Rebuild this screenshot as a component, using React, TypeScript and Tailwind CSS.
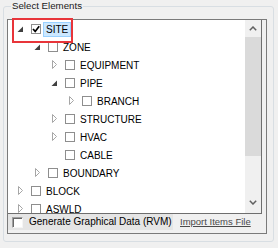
import React from "react";

type Row = { l: number; t: string; e: "open" | "closed" | "none"; checked?: boolean; sel?: boolean };

const rows: Row[] = [
  { l: 0, t: "SITE", e: "open", checked: true, sel: true },
  { l: 1, t: "ZONE", e: "open" },
  { l: 2, t: "EQUIPMENT", e: "closed" },
  { l: 2, t: "PIPE", e: "open" },
  { l: 3, t: "BRANCH", e: "closed" },
  { l: 2, t: "STRUCTURE", e: "closed" },
  { l: 2, t: "HVAC", e: "closed" },
  { l: 2, t: "CABLE", e: "none" },
  { l: 1, t: "BOUNDARY", e: "closed" },
  { l: 0, t: "BLOCK", e: "closed" },
  { l: 0, t: "ASWLD", e: "closed" },
];

const indent = ["pl-[9px]", "pl-[26px]", "pl-[43px]", "pl-[60px]"];

function Expander({ e }: { e: Row["e"] }) {
  return (
    <svg width="14" height="18" viewBox="0 0 14 18" className="shrink-0">
      {e === "open" && <path d="M6 6.5 L6 12 L0.5 12 Z" fill="#404040" />}
      {e === "closed" && <path d="M1.5 4.5 L5.5 8.5 L1.5 12.5 Z" fill="none" stroke="#a6a6a6" strokeWidth="1" />}
    </svg>
  );
}

function Check({ checked }: { checked?: boolean }) {
  return (
    <div className="w-[10px] h-[10px] border border-[#8e8e8e] bg-white shrink-0 flex items-center justify-center">
      {checked && (
        <svg width="8" height="8" viewBox="0 0 8 8">
          <path d="M1 4 L3.2 6.4 L7.2 1.2" fill="none" stroke="#000" strokeWidth="1.7" />
        </svg>
      )}
    </div>
  );
}

export default function App() {
  return (
    <div className="w-[278px] h-[248px] bg-[#f0f0f0] pt-[6px] pl-[3px] font-['Liberation_Sans',Arial,sans-serif] text-black">
      <div className="relative w-[271px] h-[236px] border border-[#d8dee3] rounded-[3px] pt-[12px] pl-[3px]">
        <div className="absolute left-[7px] top-[-7px] px-[1px] bg-[#f0f0f0] text-[9.7px] leading-[12px] text-[#1a1a1a]">
          Select Elements
        </div>
        <div className="w-[260px] h-[215px] border border-[#7a7a7a] flex flex-col">
          <div className="flex h-[194px] w-[254px] border-r border-b border-[#6e6e6e] bg-white">
            <div className="w-[237px] h-[193px] overflow-hidden flex flex-col">
              {rows.map((r, i) => (
                <div key={i} className={`h-[18px] shrink-0 flex items-center ${indent[r.l]}`}>
                  <Expander e={r.e} />
                  <Check checked={r.checked} />
                  <span
                    className={`ml-[2px] px-[2px] border h-[15px] text-[10px] leading-[13px] ${
                      r.sel ? "bg-[#cce8ff] border-[#99d1ff]" : "border-transparent"
                    }`}
                  >
                    {r.t}
                  </span>
                </div>
              ))}
            </div>
            <div className="w-[16px] h-[193px] flex flex-col">
              <div className="h-[17px] bg-[#f0f0f0] flex items-center justify-center">
                <svg width="8" height="5" viewBox="0 0 8 5">
                  <path d="M0.8 4.2 L4 1 L7.2 4.2" fill="none" stroke="#606060" strokeWidth="1.5" />
                </svg>
              </div>
              <div className="h-[119px] bg-[#dadada]" />
              <div className="flex-1 bg-[#f0f0f0]" />
              <div className="h-[17px] bg-[#f0f0f0] flex items-start justify-center pt-[4px]">
                <svg width="8" height="5" viewBox="0 0 8 5">
                  <path d="M0.8 0.8 L4 4 L7.2 0.8" fill="none" stroke="#606060" strokeWidth="1.5" />
                </svg>
              </div>
            </div>
          </div>
          <div className="flex h-[19px] items-start">
            <div className="h-[16px] w-[165px] bg-[#e5e5e5] flex items-center pl-[4px]">
              <div className="w-[11px] h-[11px] bg-white border border-t-[#a0a0a0] border-l-[#a0a0a0] border-r-[#f5f5f5] border-b-[#f5f5f5] shadow-[inset_1px_1px_0_#696969]" />
              <span className="ml-[6px] text-[10px] leading-[12px]">Generate Graphical Data (RVM)</span>
            </div>
            <span className="ml-[7px] mt-[2px] text-[9.5px] leading-[12px] text-[#4a4a4a] underline">Import Items File</span>
          </div>
        </div>
        <div className="absolute left-[8px] top-[11px] w-[61px] h-[25px] border-2 border-[#e8353a]" />
      </div>
    </div>
  );
}
